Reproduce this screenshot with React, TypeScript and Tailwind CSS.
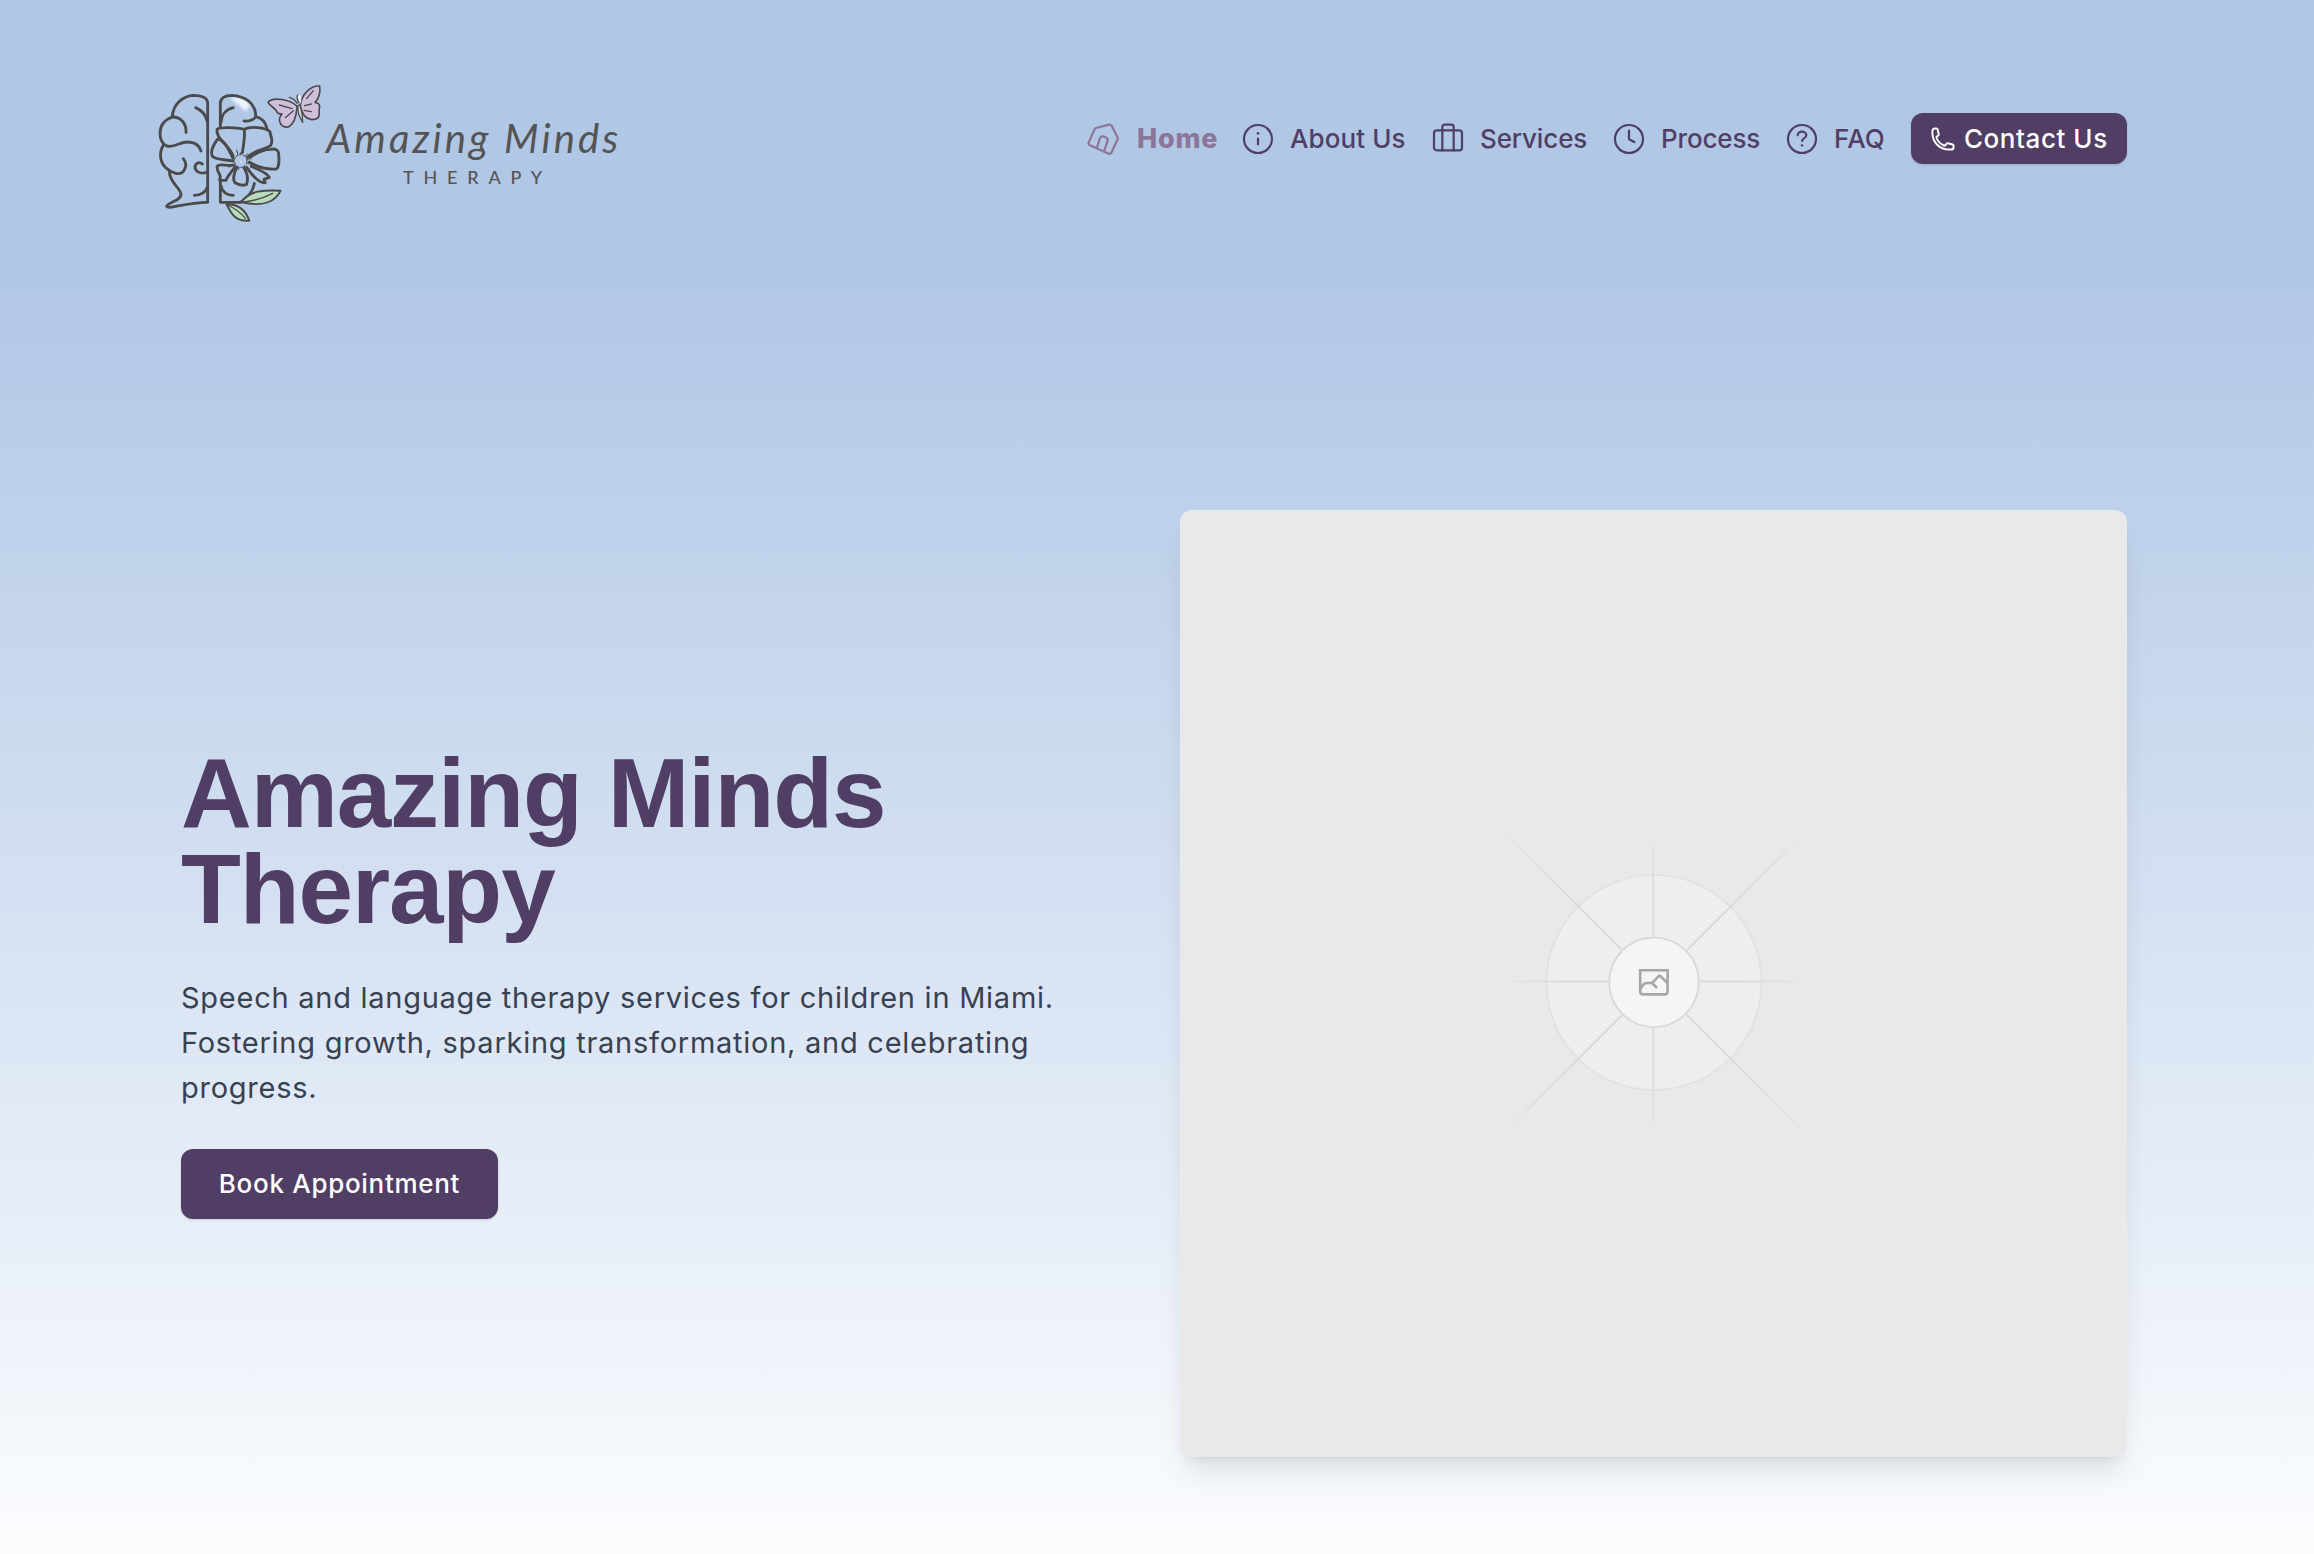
import React from 'react';

type IconProps = { children: React.ReactNode };

function NavIcon({ children }: IconProps) {
  return (
    <svg
      viewBox="0 0 96 96"
      className="size-8 shrink-0"
      fill="none"
      stroke="currentColor"
      strokeWidth={6.6}
      strokeLinecap="round"
      strokeLinejoin="round"
    >
      {children}
    </svg>
  );
}

const HomeIcon = () => (
  <NavIcon>
    <path d="M27 15 L66 5 Q71 4 74 8 L91 42 Q93 47 91 51 L73 89 Q70 94 65 92 L9 67 Q3 64 5 59 L22 20 Q24 16 27 15Z" />
    <path d="M30 74 L38 48 Q42 37 53 41 Q64 45 62 53 L53 80" />
  </NavIcon>
);

const InfoIcon = () => (
  <NavIcon>
    <circle cx="48" cy="48" r="42" />
    <path d="M48 47V64" />
    <path d="M48 31V31.1" strokeWidth={8} />
  </NavIcon>
);

const CaseIcon = () => (
  <NavIcon>
    <rect x="6" y="22" width="84" height="60" rx="8" />
    <path d="M31 82V12Q31 5 38 5H58Q65 5 65 12V82" />
  </NavIcon>
);

const ClockIcon = () => (
  <NavIcon>
    <circle cx="48" cy="48" r="42" />
    <path d="M48 23V49L64 57" />
  </NavIcon>
);

const HelpIcon = () => (
  <NavIcon>
    <circle cx="48" cy="48" r="42" />
    <path d="M35 37C35 22 61 22 61 37C61 46 48 46 48 54" />
    <path d="M48 67V67.1" strokeWidth={7} />
  </NavIcon>
);

const PhoneIcon = () => (
  <svg viewBox="0 0 24 24" className="size-[26px] shrink-0" fill="none" stroke="currentColor" strokeWidth={1.8} strokeLinecap="round" strokeLinejoin="round">
    <path d="M2.25 6.75c0 8.284 6.716 15 15 15h2.25a2.25 2.25 0 0 0 2.25-2.25v-1.372c0-.516-.351-.966-.852-1.091l-4.423-1.106c-.44-.11-.902.055-1.173.417l-.97 1.293c-.282.376-.769.542-1.21.38a12.035 12.035 0 0 1-7.143-7.143c-.162-.441.004-.928.38-1.21l1.293-.97c.363-.271.527-.734.417-1.173L6.963 3.102a1.125 1.125 0 0 0-1.091-.852H4.5A2.25 2.25 0 0 0 2.25 4.5v2.25Z" />
  </svg>
);

function LogoMark() {
  return (
    <svg viewBox="0 0 600 510" className="h-[170px] w-[200px] shrink-0" fill="none" stroke="#4a4a4b" strokeWidth={8.5} strokeLinecap="round" strokeLinejoin="round">
      <defs>
        <filter id="shine" x="-30%" y="-30%" width="160%" height="160%">
          <feGaussianBlur stdDeviation="4" />
        </filter>
      </defs>
      <path d="M270 84Q295 78 318 90L330 106L318 124L296 106Z" fill="#eef4fc" stroke="none" filter="url(#shine)" />
      {/* left half of the brain */}
      <path d="M203 395V100C203 84 185 76 160 76C128 78 100 102 97 138" />
      <path d="M97 141C122 140 140 160 138 188" />
      <path d="M97 141C72 150 60 168 60 190C60 208 68 224 80 228C105 234 118 216 143 216C165 216 178 226 183 243" />
      <path d="M70 226C57 248 59 275 76 292C92 306 118 320 131 303C140 290 138 276 130 266" />
      <path d="M88 304C88 338 119 350 123 372C124 392 84 397 80 409C86 420 130 398 203 397" />
      <path d="M167 113C185 121 197 135 201 152M200 307C178 314 164 302 165 290C168 277 180 275 187 282M163 376C182 376 196 368 202 352" />
      {/* right half of the brain */}
      <path d="M241 170V100C241 84 255 76 275 76C318 78 348 102 347 140C340 151 328 154 312 153M347 140C365 144 377 158 381 176" />
      <path d="M280 113C258 118 244 135 243 157M241 330V397H300C322 388 340 362 343 340M243 348C248 368 262 376 280 376" />
      {/* flower */}
      <path d="M279 258C268 225 226 205 231 178C240 171 290 172 313 178C315 200 311 225 307 248" />
      <path d="M313 178C330 168 376 172 390 185C390 198 402 208 392 226C375 240 342 240 322 262" />
      <path d="M330 262C350 248 375 238 392 238C405 235 417 240 416 254C418 275 416 296 408 297C380 299 350 290 328 276" />
      <path d="M334 289C350 296 382 308 388 322L372 328L376 338C356 342 334 312 320 292" />
      <path d="M291 292C279 312 279 332 285 338C298 345 313 347 320 343C326 325 320 306 311 292" />
      <path d="M279 285C260 290 238 278 231 290C230 304 240 312 241 319L239 331L258 331C262 316 280 302 284 290" />
      <path d="M279 265C262 228 246 205 232 208C222 222 209 244 217 259C235 272 260 268 278 273" />
      <path d="M301 248V262M290 240L296 262M277 256L290 266M265 273L285 273M267 292L288 281M296 298L298 284M318 296L308 282M335 283L312 277M334 266L312 270M322 252L308 264" strokeWidth={3} />
      <circle cx="302" cy="273" r="19" fill="#b1c7e6" strokeWidth={3} strokeDasharray="7 5" />
      <circle cx="303" cy="276" r="3" fill="#d9e3f0" stroke="none" />
      {/* leaves */}
      <path d="M303 397C330 360 372 360 422 362C405 396 372 412 303 397Z" fill="#b7dbbb" strokeWidth={6} />
      <path d="M303 397C340 394 375 382 398 370" strokeWidth={4} />
      <path d="M260 403C300 402 318 424 328 452C292 455 276 438 260 403Z" fill="#b7dbbb" strokeWidth={6} />
      <path d="M262 405C288 416 302 428 316 445" strokeWidth={4} />
      {/* butterfly */}
      <g strokeWidth={5}>
        <path d="M470 108C452 90 398 78 384 97C390 109 405 113 410 124C412 133 418 131 426 132C410 150 422 174 445 171C462 162 469 138 471 112Z" fill="#cfbfdb" />
        <path d="M481 104C486 72 512 46 539 48C542 68 536 88 525 97C540 100 541 106 537 120C540 140 536 149 515 149C495 146 485 132 481 108Z" fill="#cfbfdb" />
        <path d="M418 105L456 116M436 143L460 122M500 86L520 62M494 107L514 102M492 121L514 125" strokeWidth={4} />
        <ellipse cx="478" cy="88" rx="6" ry="13" fill="#e8eef5" stroke="none" />
        <path d="M474 106C472 125 480 145 488 157C488 135 484 118 480 106Z" fill="#dcdfe8" strokeWidth={4} />
        <path d="M472 100C466 92 458 84 448 82M477 98C472 90 470 80 473 75" strokeWidth={4} />
      </g>
    </svg>
  );
}

const links = [
  { label: 'Home', Icon: HomeIcon, cls: 'w-[155px] gap-[18px] text-[27px] font-extrabold text-[#8b7699] tracking-[0.8px]' },
  { label: 'About Us', Icon: InfoIcon, cls: 'w-[190px] gap-4 font-medium tracking-[0.1px]' },
  { label: 'Services', Icon: CaseIcon, cls: 'w-[181px] gap-4 font-medium tracking-[-0.15px]' },
  { label: 'Process', Icon: ClockIcon, cls: 'w-[173px] gap-4 font-medium tracking-[-0.15px]' },
  { label: 'FAQ', Icon: HelpIcon, cls: 'w-[125px] gap-4 font-medium tracking-[0.2px]' },
];

function ImagePlaceholder() {
  return (
    <svg viewBox="0 0 328 328" className="size-[328px]" fill="none">
      <defs>
        <radialGradient id="ray" gradientUnits="userSpaceOnUse" cx="164" cy="164" r="155">
          <stop offset="0.6" stopColor="#d8d8d8" />
          <stop offset="1" stopColor="#d8d8d8" stopOpacity="0" />
        </radialGradient>
        <radialGradient id="rayLong" gradientUnits="userSpaceOnUse" cx="164" cy="164" r="222">
          <stop offset="0.55" stopColor="#d8d8d8" />
          <stop offset="1" stopColor="#d8d8d8" stopOpacity="0" />
        </radialGradient>
      </defs>
      <circle cx="164" cy="163.5" r="107.5" fill="#eeeeee" stroke="#e1e1e1" strokeWidth="1.7" />
      <path d="M163.3 8V320M8 162.3H320" stroke="url(#ray)" strokeWidth="1.8" />
      <path d="M8 7L320 319M320 8L8 320" stroke="url(#rayLong)" strokeWidth="1.8" />
      <circle cx="164" cy="163.3" r="44.7" fill="#f5f5f5" stroke="#d8d8d8" strokeWidth="1.7" />
      <g stroke="#a6a6a6" strokeWidth="2.6">
        <path d="M150.2 151.3H177.6V172.2Q177.6 175.4 174.4 175.4H153.4Q150.2 175.4 150.2 172.2Z" />
        <path d="M150.2 170L152.6 166.6Q154.2 164 157 164H160.5Q162.3 164 163.5 162.6L168.2 157.6Q169.5 156.2 170.8 157.4L177.6 164.3M161.6 163.6L167 169" />
      </g>
    </svg>
  );
}

export default function App() {
  return (
    <div className="h-[1554px] overflow-hidden bg-white font-['Inter',sans-serif] text-[#513e64]">
      <header className="flex h-[276px] items-start justify-between bg-[#b1c7e6] pr-[187px] pl-[140px]">
        <div className="flex pt-[70px]">
          <LogoMark />
          <div className="-ml-[14px] flex flex-col pt-[44px] font-['Lato',sans-serif] text-[#555454]">
            <span className="text-[40px] leading-[48px] font-normal tracking-[3.1px] italic">Amazing Minds</span>
            <span className="mt-[3px] pl-[77px] text-[18px] leading-6 font-medium tracking-[9.8px]">THERAPY</span>
          </div>
        </div>
        <nav className="flex items-center pt-[113px] text-[26px] leading-[51px]">
          {links.map(({ label, Icon, cls }) => (
            <a key={label} className={`flex h-[51px] items-center whitespace-nowrap ${cls}`}>
              <Icon />
              <span>{label}</span>
            </a>
          ))}
          <a className="flex h-[51px] w-[216px] items-center gap-2 rounded-xl bg-[#513e64] pl-[19px] font-medium tracking-[0.55px] whitespace-nowrap text-white shadow-sm">
            <PhoneIcon />
            Contact Us
          </a>
        </nav>
      </header>
      <section className="flex h-[1414px] items-center gap-[52px] bg-linear-to-b from-[#b1c7e6] to-white to-95% pr-[187px] pl-[181px]">
        <div className="flex w-[947px] flex-col items-start">
          <h1 className="-mt-[3px] font-['Liberation_Sans',sans-serif] text-[98px] leading-[96px] font-bold tracking-[-1.1px]">
            Amazing Minds
            <br />
            Therapy
          </h1>
          <p className="mt-[38px] text-[29px] leading-[45px] tracking-[0.74px] whitespace-nowrap text-[#374151]">
            Speech and language therapy services for children in Miami.
            <br />
            Fostering growth, sparking transformation, and celebrating
            <br />
            progress.
          </p>
          <a className="mt-[39px] flex h-[70px] w-[317px] items-center justify-center rounded-xl bg-[#513e64] text-[26px] font-medium tracking-[0.7px] text-white shadow-sm">
            Book Appointment
          </a>
        </div>
        <div className="flex size-[947px] shrink-0 items-center justify-center rounded-xl bg-[#e9e9e9] shadow-[0_20px_30px_-6px_rgba(0,0,0,0.1),0_8px_12px_-8px_rgba(0,0,0,0.1)]">
          <ImagePlaceholder />
        </div>
      </section>
    </div>
  );
}
